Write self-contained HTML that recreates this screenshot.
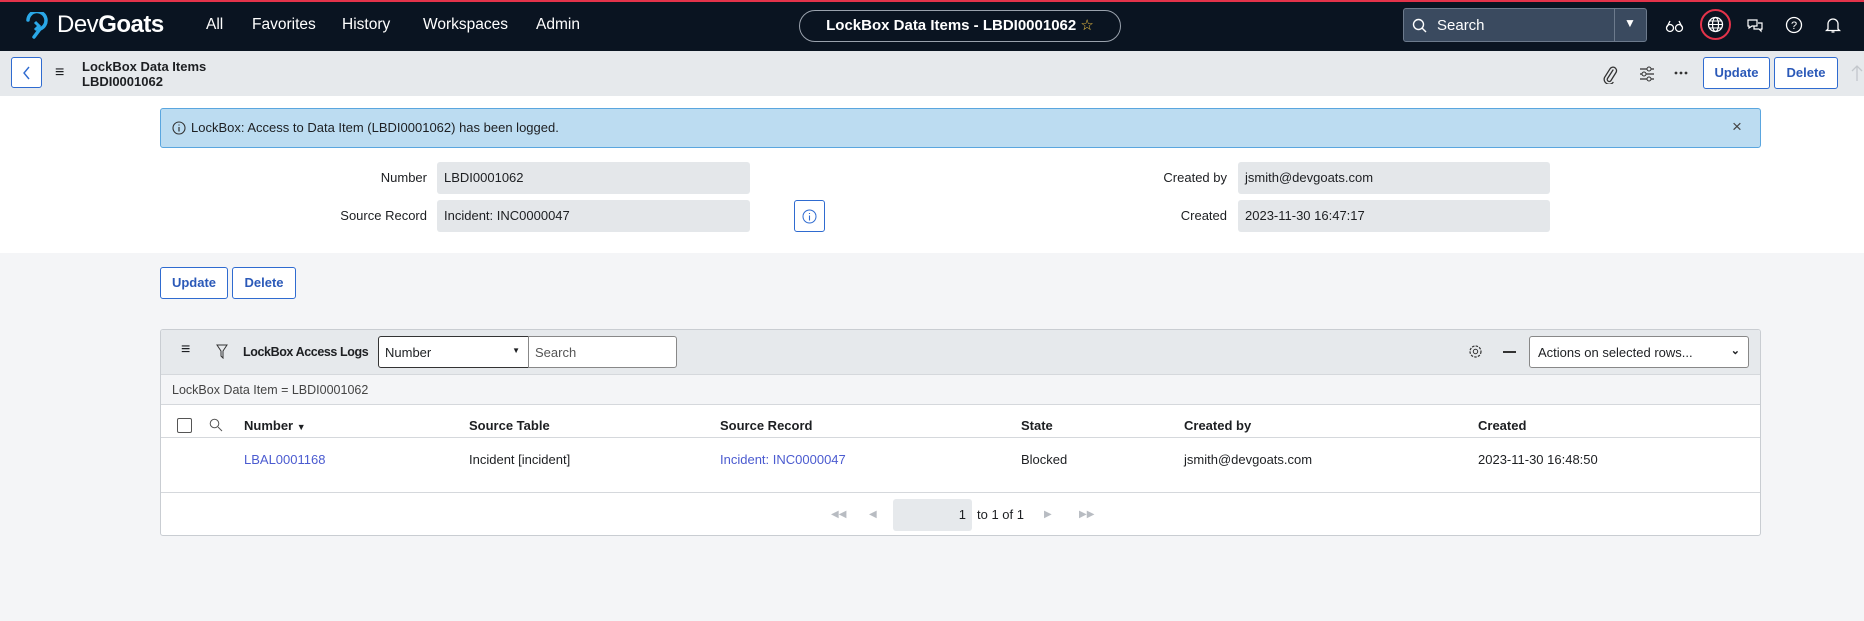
<!DOCTYPE html>
<html><head><meta charset="utf-8"><style>
*{box-sizing:border-box;margin:0;padding:0}
body{width:1864px;height:621px;overflow:hidden;font-family:"Liberation Sans",sans-serif;font-size:13px;color:#1d1f22;background:#f4f5f7;position:relative}
.a{position:absolute}
.nav{left:0;top:0;width:1864px;height:51px;background:#0a1421;border-top:2px solid #e3334a}
.nav .t{color:#fff;font-size:15.5px;top:14px}
.sub{left:0;top:51px;width:1864px;height:45px;background:#e6e9ec}
.white{left:0;top:96px;width:1864px;height:157px;background:#fff}
.btn{border:1px solid #2f6bd0;border-radius:3px;background:#fff;color:#2b59b8;font-weight:bold;font-size:13px;text-align:center}
.fld{background:#e4e7ea;border-radius:3px;padding-left:7px;line-height:32px;font-size:13px}
.lbl{text-align:right;font-size:13px;line-height:32px}
.hd{font-weight:bold;font-size:13px}
.lnk{color:#4b5bd0}
</style></head><body>
<div class="a nav">
  <svg class="a" style="left:24px;top:10px" width="26" height="30" viewBox="0 0 26 30"><path d="M4 8 A9 9 0 1 1 16 17 L10 25" fill="none" stroke="#2aa8e8" stroke-width="3.5" stroke-linecap="round"/><path d="M11 10 L15 14 L11 18" fill="none" stroke="#2aa8e8" stroke-width="3"/></svg>
  <div class="a" style="left:57px;top:9px;color:#fff;font-size:24px;letter-spacing:-0.5px">Dev<b>Goats</b></div>
  <div class="a t" style="left:206px">All</div>
  <div class="a t" style="left:252px">Favorites</div>
  <div class="a t" style="left:342px">History</div>
  <div class="a t" style="left:423px">Workspaces</div>
  <div class="a t" style="left:536px">Admin</div>
  <div class="a" style="left:799px;top:8px;width:322px;height:32px;border:1px solid #9aa2ad;border-radius:16px;color:#fff;font-weight:bold;font-size:15px;text-align:center;line-height:30px">LockBox Data Items - LBDI0001062 <span style="color:#f5c542;font-weight:normal">☆</span></div>
  <div class="a" style="left:1403px;top:6px;width:244px;height:34px;background:#3a4a5f;border:1px solid #6c7a8c;border-radius:3px">
    <svg class="a" style="left:8px;top:9px" width="16" height="16"><circle cx="6.5" cy="6.5" r="5" fill="none" stroke="#fff" stroke-width="1.4"/><path d="M10 10 L14 14" stroke="#fff" stroke-width="1.4"/></svg>
    <div class="a" style="left:33px;top:8px;color:#fff;font-size:15px">Search</div>
    <div class="a" style="left:210px;top:0;width:1px;height:32px;background:#6c7a8c"></div>
    <div class="a" style="left:220px;top:7px;color:#fff;font-size:12px">▼</div>
  </div>
  <svg class="a" style="left:1665px;top:16px" width="20" height="16"><circle cx="5" cy="10" r="3.5" fill="none" stroke="#fff" stroke-width="1.3"/><circle cx="14" cy="10" r="3.5" fill="none" stroke="#fff" stroke-width="1.3"/><path d="M2 9 L5 3 M17 9 L14 3" stroke="#fff" stroke-width="1.3"/></svg>
  <div class="a" style="left:1700px;top:7px;width:31px;height:31px;border:2px solid #e3334a;border-radius:50%"></div>
  <svg class="a" style="left:1707px;top:14px" width="17" height="17" viewBox="0 0 17 17"><circle cx="8.5" cy="8.5" r="7" fill="none" stroke="#fff" stroke-width="1.3"/><ellipse cx="8.5" cy="8.5" rx="3" ry="7" fill="none" stroke="#fff" stroke-width="1.2"/><path d="M1.5 8.5H15.5M3 5H14M3 12H14" stroke="#fff" stroke-width="1.1"/></svg>
  <svg class="a" style="left:1746px;top:15px" width="18" height="16"><path d="M2 3h9v6H6l-3 2V9H2z M8 9v3h5l2 2v-2h1V6h-4" fill="none" stroke="#fff" stroke-width="1.2"/></svg>
  <svg class="a" style="left:1785px;top:14px" width="18" height="18"><circle cx="9" cy="9" r="7.5" fill="none" stroke="#fff" stroke-width="1.3"/><text x="9" y="13" fill="#fff" font-size="11" text-anchor="middle" font-family="Liberation Sans">?</text></svg>
  <svg class="a" style="left:1825px;top:14px" width="16" height="18"><path d="M3 13V8a5 5 0 0 1 10 0v5l1.5 1.5h-13z M6.5 16h3" fill="none" stroke="#fff" stroke-width="1.3"/></svg>
</div>
<div class="a sub">
  <div class="a" style="left:11px;top:6px;width:31px;height:31px;border:1px solid #2f6bd0;border-radius:3px;background:#fff"><svg class="a" style="left:9px;top:8px" width="12" height="14"><path d="M8 1 L3 7 L8 13" fill="none" stroke="#2f6bd0" stroke-width="1.4"/></svg></div>
  <div class="a" style="left:55px;top:13px;font-size:16px">≡</div>
  <div class="a" style="left:82px;top:8px;font-size:13px;font-weight:bold;line-height:15px">LockBox Data Items<br>LBDI0001062</div>
  <svg class="a" style="left:1602px;top:13px" width="16" height="20" viewBox="0 0 16 20"><path d="M11 6 L5.5 14.5 a2 2 0 0 0 3.4 2.1 L14 8.5 a3.5 3.5 0 0 0 -6 -3.7 L2.5 13.5 a5 5 0 0 0 8.5 5" fill="none" stroke="#333" stroke-width="1.3" stroke-linecap="round"/></svg>
  <svg class="a" style="left:1638px;top:14px" width="18" height="18"><path d="M2 4h14M2 9h14M2 14h14" stroke="#333" stroke-width="1.2"/><circle cx="11" cy="4" r="2" fill="#e6e9ec" stroke="#333"/><circle cx="6" cy="9" r="2" fill="#e6e9ec" stroke="#333"/><circle cx="11" cy="14" r="2" fill="#e6e9ec" stroke="#333"/></svg>
  <svg class="a" style="left:1674px;top:20px" width="14" height="4"><circle cx="2" cy="2" r="1.4" fill="#333"/><circle cx="7" cy="2" r="1.4" fill="#333"/><circle cx="12" cy="2" r="1.4" fill="#333"/></svg>
  <div class="a btn" style="left:1703px;top:6px;width:67px;height:32px;line-height:30px">Update</div>
  <div class="a btn" style="left:1774px;top:6px;width:64px;height:32px;line-height:30px">Delete</div>
  <svg class="a" style="left:1851px;top:13px" width="12" height="18"><path d="M6 17V2M1 7l5-5 5 5" fill="none" stroke="#c3c7cc" stroke-width="1.3"/></svg>
</div>
<div class="a white">
  <div class="a" style="left:160px;top:12px;width:1601px;height:40px;background:#bcdcf1;border:1px solid #5aa6df;border-radius:3px">
    <svg class="a" style="left:11px;top:12px" width="14" height="14"><circle cx="7" cy="7" r="6" fill="none" stroke="#333" stroke-width="1.1"/><path d="M7 6v4.5M7 3.5v1" stroke="#333" stroke-width="1.2"/></svg>
    <div class="a" style="left:30px;top:11px;font-size:13px">LockBox: Access to Data Item (LBDI0001062) has been logged.</div>
    <div class="a" style="left:1571px;top:8px;font-size:17px;color:#444">×</div>
  </div>
  <div class="a lbl" style="left:300px;top:66px;width:127px">Number</div>
  <div class="a fld" style="left:437px;top:66px;width:313px;height:32px">LBDI0001062</div>
  <div class="a lbl" style="left:300px;top:104px;width:127px">Source Record</div>
  <div class="a fld" style="left:437px;top:104px;width:313px;height:32px">Incident: INC0000047</div>
  <div class="a" style="left:794px;top:104px;width:31px;height:32px;border:1px solid #2f6bd0;border-radius:3px"><svg class="a" style="left:7px;top:8px" width="15" height="15"><circle cx="7.5" cy="7.5" r="6.5" fill="none" stroke="#2f6bd0" stroke-width="1"/><path d="M7.5 6.5v5M7.5 4v1" stroke="#2f6bd0" stroke-width="1.1"/></svg></div>
  <div class="a lbl" style="left:1100px;top:66px;width:127px">Created by</div>
  <div class="a fld" style="left:1238px;top:66px;width:312px;height:32px">jsmith@devgoats.com</div>
  <div class="a lbl" style="left:1100px;top:104px;width:127px">Created</div>
  <div class="a fld" style="left:1238px;top:104px;width:312px;height:32px">2023-11-30 16:47:17</div>
</div>
<div class="a btn" style="left:160px;top:267px;width:68px;height:32px;line-height:30px">Update</div>
<div class="a btn" style="left:232px;top:267px;width:64px;height:32px;line-height:30px">Delete</div>
<div class="a" style="left:160px;top:329px;width:1601px;height:207px;background:#fff;border:1px solid #c9cdd2;border-radius:3px;overflow:hidden">
  <div class="a" style="left:0;top:0;width:1600px;height:45px;background:#e6e9ec;border-bottom:1px solid #d5d8dc"></div>
  <div class="a" style="left:20px;top:11px;font-size:16px">≡</div>
  <svg class="a" style="left:55px;top:14px" width="12" height="15"><path d="M1 1h10L7 7v7L5 12V7z" fill="none" stroke="#333" stroke-width="1"/></svg>
  <div class="a hd" style="left:82px;top:15px;font-size:12.5px;letter-spacing:-0.4px;white-space:nowrap;width:133px;overflow:hidden">LockBox Access Logs</div>
  <div class="a" style="left:217px;top:6px;width:151px;height:32px;border:1px solid #333;border-radius:3px 0 0 3px;background:#fff;padding:8px 6px;font-size:13px">Number<span style="position:absolute;right:8px;top:9px;font-size:8px">▼</span></div>
  <div class="a" style="left:367px;top:6px;width:149px;height:32px;border:1px solid #888;border-radius:0 3px 3px 0;background:#fff;padding:8px 6px;color:#555">Search</div>
  <svg class="a" style="left:1307px;top:14px" width="15" height="15"><circle cx="7.5" cy="7.5" r="5.5" fill="none" stroke="#333" stroke-width="1.2" stroke-dasharray="2.5 1.2"/><circle cx="7.5" cy="7.5" r="2.2" fill="none" stroke="#333"/></svg>
  <div class="a" style="left:1342px;top:21px;width:13px;height:1.5px;background:#333"></div>
  <div class="a" style="left:1368px;top:6px;width:220px;height:32px;border:1px solid #888;border-radius:3px;background:#fff;padding:8px 8px;font-size:13px">Actions on selected rows...<span style="position:absolute;right:8px;top:7px;font-size:11px;font-weight:bold">⌄</span></div>
  <div class="a" style="left:0;top:45px;width:1600px;height:30px;background:#f4f5f7;border-bottom:1px solid #d5d8dc"></div>
  <div class="a" style="left:11px;top:53px;font-size:12.5px;color:#444">LockBox Data Item = LBDI0001062</div>
  <div class="a" style="left:16px;top:88px;width:15px;height:15px;border:1px solid #555;border-radius:2px"></div>
  <svg class="a" style="left:48px;top:88px" width="14" height="14"><circle cx="5.5" cy="5.5" r="4.3" fill="none" stroke="#555"/><path d="M9 9l4 4" stroke="#555"/></svg>
  <div class="a hd" style="left:83px;top:88px">Number <span style="font-size:9px">▼</span></div>
  <div class="a hd" style="left:308px;top:88px">Source Table</div>
  <div class="a hd" style="left:559px;top:88px">Source Record</div>
  <div class="a hd" style="left:860px;top:88px">State</div>
  <div class="a hd" style="left:1023px;top:88px">Created by</div>
  <div class="a hd" style="left:1317px;top:88px">Created</div>
  <div class="a" style="left:0;top:107px;width:1600px;height:1px;background:#d5d8dc"></div>
  <div class="a lnk" style="left:83px;top:122px">LBAL0001168</div>
  <div class="a" style="left:308px;top:122px">Incident [incident]</div>
  <div class="a lnk" style="left:559px;top:122px">Incident: INC0000047</div>
  <div class="a" style="left:860px;top:122px">Blocked</div>
  <div class="a" style="left:1023px;top:122px">jsmith@devgoats.com</div>
  <div class="a" style="left:1317px;top:122px">2023-11-30 16:48:50</div>
  <div class="a" style="left:0;top:162px;width:1600px;height:1px;background:#d5d8dc"></div>
  <div class="a" style="left:670px;top:179px;color:#b8bcc2;font-size:10px">◀◀</div>
  <div class="a" style="left:708px;top:179px;color:#b8bcc2;font-size:10px">◀</div>
  <div class="a" style="left:732px;top:169px;width:79px;height:32px;background:#e6e9ec;border-radius:3px;text-align:right;padding:8px 6px">1</div>
  <div class="a" style="left:816px;top:177px">to 1 of 1</div>
  <div class="a" style="left:883px;top:179px;color:#b8bcc2;font-size:10px">▶</div>
  <div class="a" style="left:918px;top:179px;color:#b8bcc2;font-size:10px">▶▶</div>
</div>
</body></html>
